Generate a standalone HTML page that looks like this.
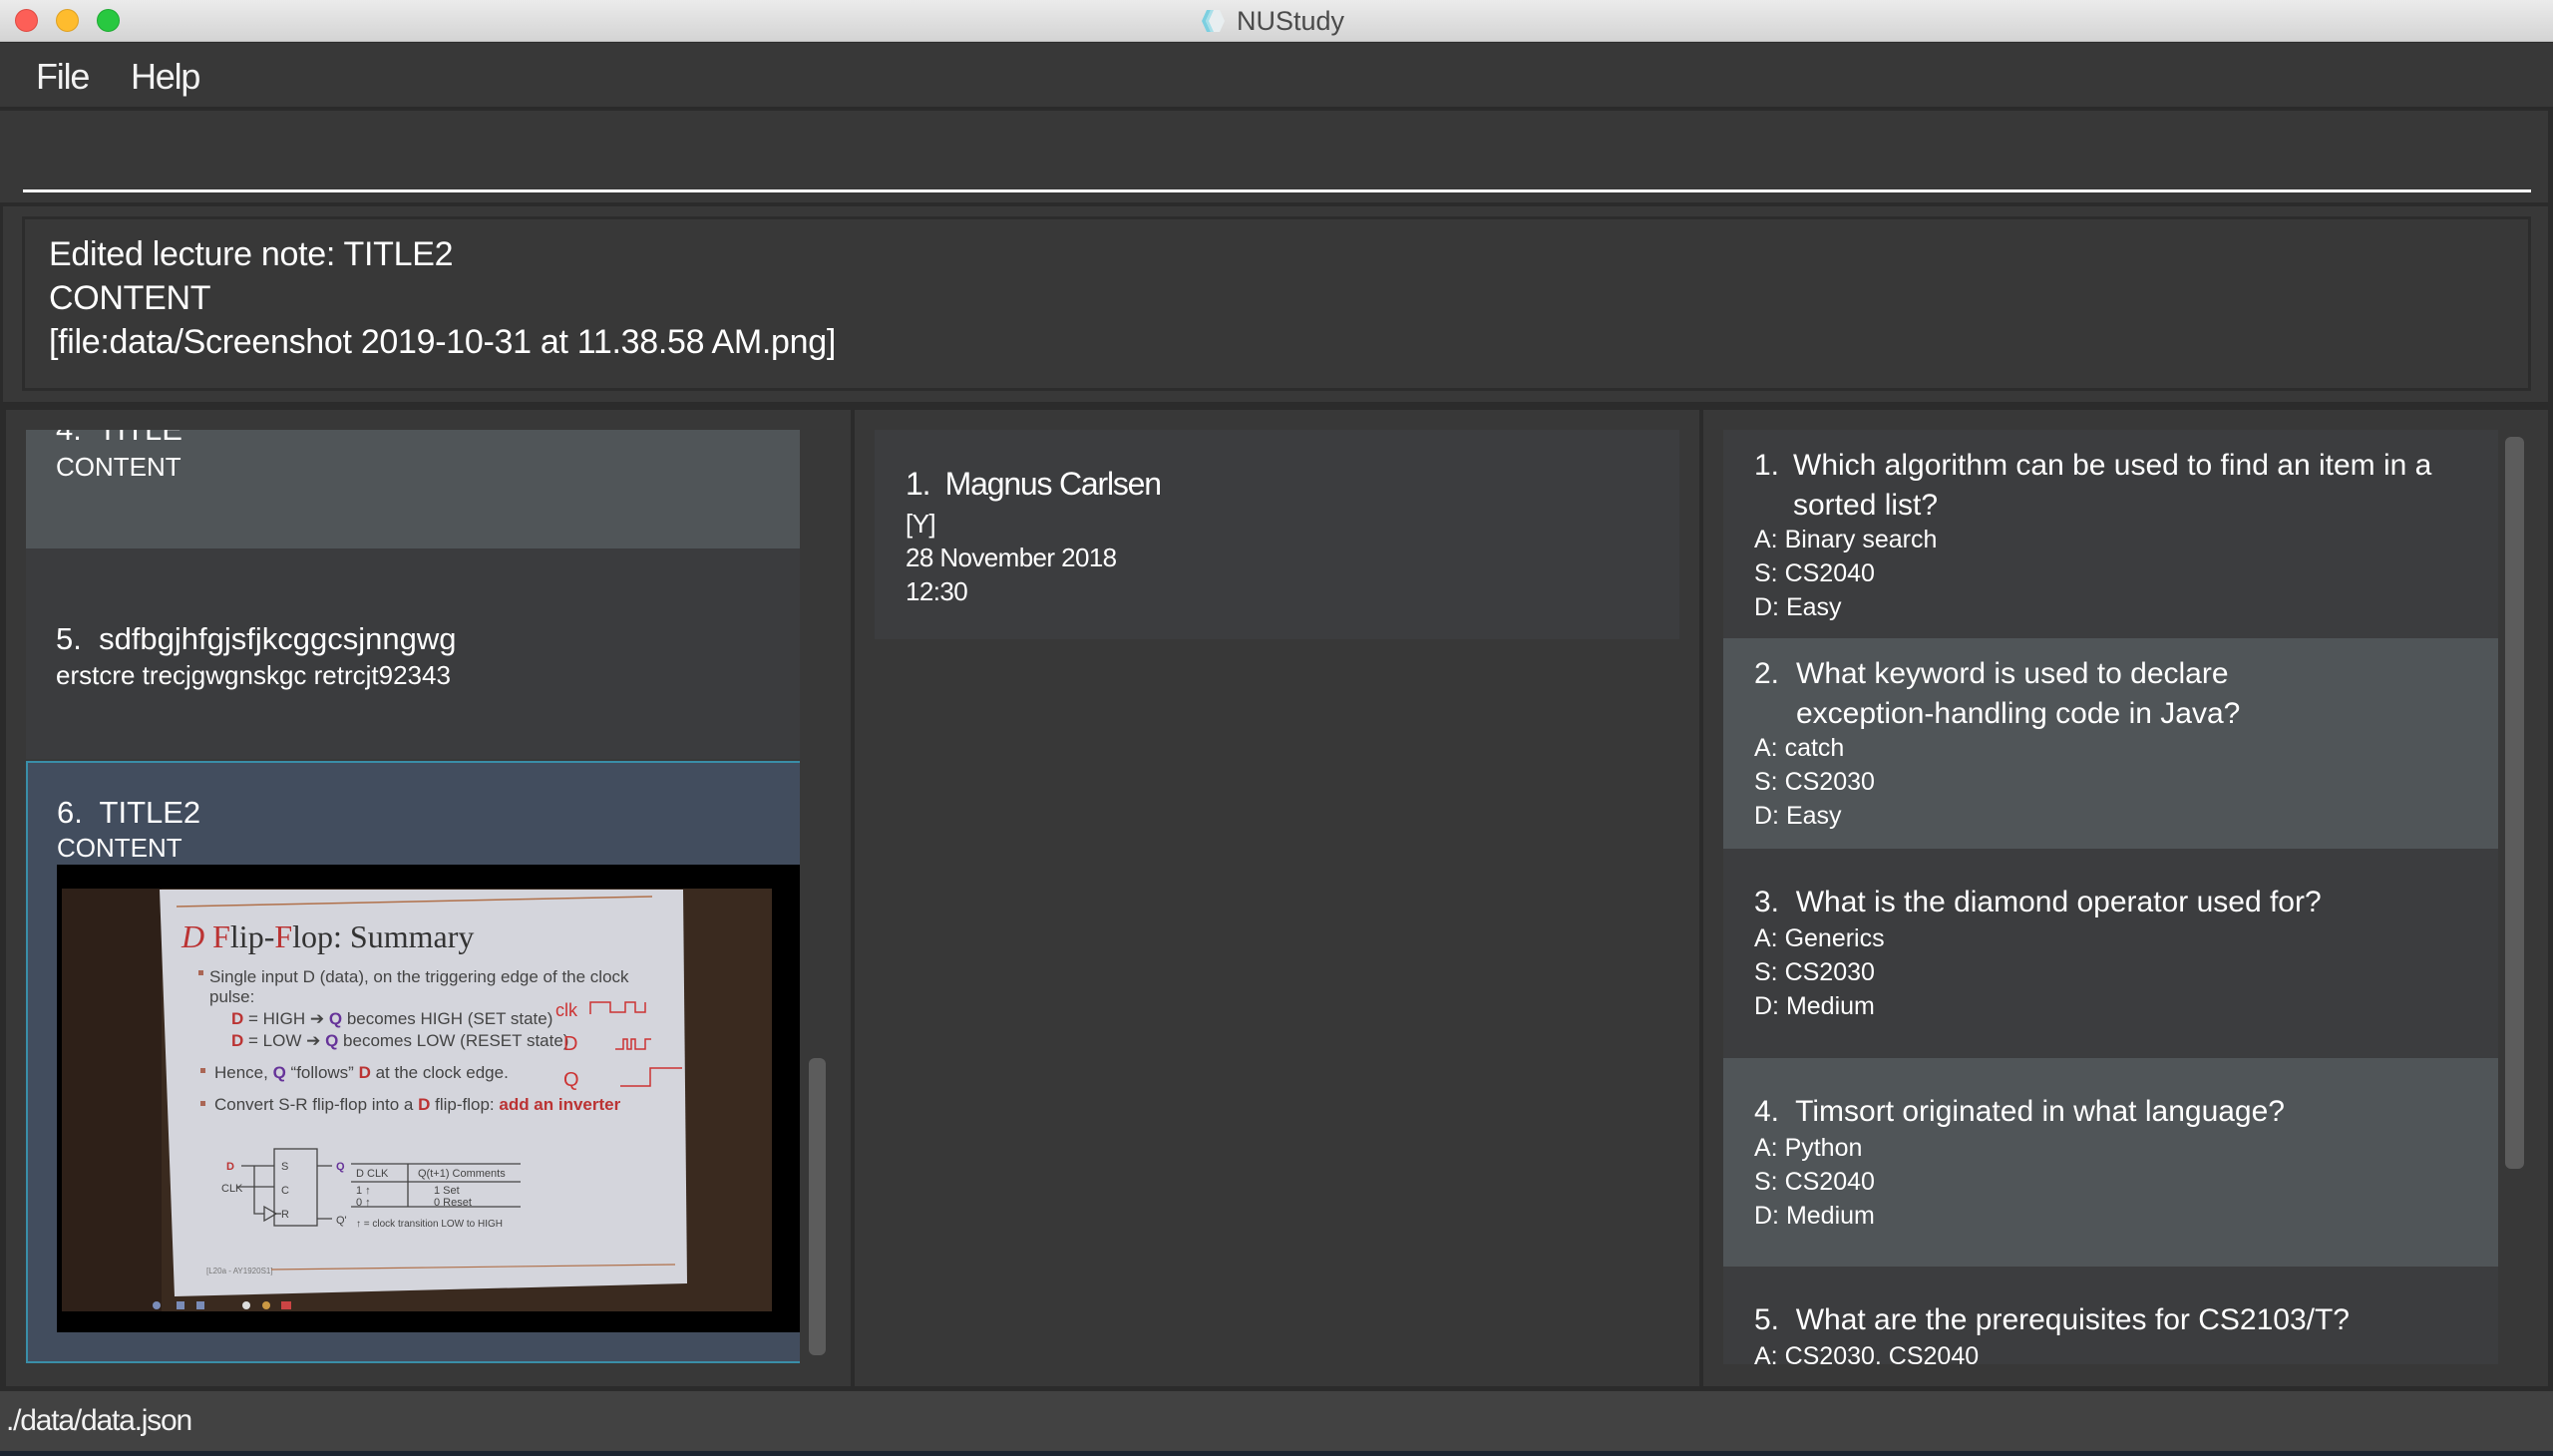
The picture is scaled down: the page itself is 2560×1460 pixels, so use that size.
<!DOCTYPE html>
<html><head><meta charset="utf-8"><style>
*{margin:0;padding:0;box-sizing:border-box}
body{width:2560px;height:1460px;background:#2b2b2b;font-family:"Liberation Sans",sans-serif;color:#fff;position:relative;overflow:hidden}
.abs{position:absolute}
.t{position:absolute;white-space:nowrap}
.cond{letter-spacing:-1.2px}
</style></head><body>
<!-- title bar -->
<div class="abs" style="left:0;top:0;width:2560px;height:42px;background:linear-gradient(#ebebeb,#d4d4d4);border-bottom:1px solid #b8b8b8"></div>
<div class="abs" style="left:15px;top:9px;width:23px;height:23px;border-radius:50%;background:#fd5f57;border:1px solid #de4a42"></div>
<div class="abs" style="left:56px;top:9px;width:23px;height:23px;border-radius:50%;background:#febc2e;border:1px solid #dea123"></div>
<div class="abs" style="left:97px;top:9px;width:23px;height:23px;border-radius:50%;background:#28c840;border:1px solid #1eaa32"></div>
<svg class="abs" style="left:1203px;top:8px" width="26" height="26" viewBox="0 0 26 26"><polygon points="7,2 20,2 25,13 20,24 7,24 2,13" fill="#e8eef0"/><polygon points="7,2 11,2 6,13 11,24 7,24 2,13" fill="#7ccfe0"/><polygon points="11,2 14,2 9,13 14,24 11,24 6,13" fill="#a8dfe9"/></svg>
<div class="t" style="left:1240px;top:6px;font-size:27px;color:#4a4a4a">NUStudy</div>
<!-- menu -->
<div class="abs" style="left:0;top:43px;width:2560px;height:66px;background:#383838;border-bottom:2px solid #2a2a2a"></div>
<div class="t cond" style="left:36px;top:56px;font-size:36px;color:#f2f2f2">File</div>
<div class="t cond" style="left:131px;top:56px;font-size:36px;color:#f2f2f2">Help</div>
<!-- command box -->
<div class="abs" style="left:0;top:111px;width:2555px;height:92px;background:#383838"></div>
<div class="abs" style="left:23px;top:190px;width:2515px;height:3px;background:#fff"></div>
<!-- result -->
<div class="abs" style="left:3px;top:207px;width:2552px;height:196px;background:#383838"></div>
<div class="abs" style="left:22px;top:217px;width:2516px;height:175px;background:#383838;border:3px solid #2c2c2c"></div>
<div class="t" style="left:49px;top:233px;font-size:34px;line-height:44px;color:#fff;letter-spacing:-0.3px">Edited lecture note: TITLE2<br>CONTENT<br>[file:data/Screenshot 2019-10-31 at 11.38.58 AM.png]</div>
<!-- panels -->
<div class="abs" style="left:6px;top:411px;width:847px;height:979px;background:#383838"></div>
<div class="abs" style="left:857px;top:411px;width:847px;height:979px;background:#383838"></div>
<div class="abs" style="left:1708px;top:411px;width:847px;height:979px;background:#383838"></div>

<!-- left list -->
<div class="abs" style="left:26px;top:431px;width:776px;height:936px;overflow:hidden">
  <div class="abs" style="left:0;top:0;width:776px;height:119px;background:#505558"></div>
  <div class="t" style="left:30px;top:-18px;font-size:31px">4.&nbsp; TITLE</div>
  <div class="t" style="left:30px;top:22px;font-size:26px">CONTENT</div>
  <div class="abs" style="left:0;top:119px;width:776px;height:211px;background:#3b3c3e"></div>
  <div class="t" style="left:30px;top:192px;font-size:31px">5.&nbsp; sdfbgjhfgjsfjkcggcsjnngwg</div>
  <div class="t" style="left:30px;top:231px;font-size:26px">erstcre trecjgwgnskgc retrcjt92343</div>
  <div class="abs" style="left:0;top:332px;width:776px;height:604px;background:#424d5e;border:2px solid #3a8ea8;border-right:none"></div>
  <div class="t" style="left:31px;top:366px;font-size:31px">6.&nbsp; TITLE2</div>
  <div class="t" style="left:31px;top:404px;font-size:26px">CONTENT</div>
  <svg class="abs" style="left:31px;top:436px" width="745" height="469" viewBox="0 0 745 469">
    <rect width="745" height="469" fill="#000"/>
    <rect x="5" y="24" width="712" height="424" fill="#3a2a1f"/>
    <rect x="5" y="24" width="100" height="424" fill="#2e2018"/>
    <polygon points="103,25 628,25 632,420 118,433" fill="#d4d5dc"/>
    <line x1="120" y1="42" x2="597" y2="32" stroke="#b0704a" stroke-width="1.5"/>
    <text x="125" y="83" font-family="Liberation Serif,serif" font-size="32" fill="#333"><tspan fill="#b33" font-style="italic">D</tspan> <tspan fill="#b33">F</tspan>lip-<tspan fill="#b33">F</tspan>lop: Summary</text>
    <g font-size="17" fill="#444">
      <text x="153" y="118">Single input D (data), on the triggering edge of the clock</text>
      <text x="153" y="138">pulse:</text>
      <text x="175" y="160"><tspan fill="#b33" font-weight="bold">D</tspan> = HIGH ➔ <tspan fill="#639" font-weight="bold">Q</tspan> becomes HIGH (SET state)</text>
      <text x="175" y="182"><tspan fill="#b33" font-weight="bold">D</tspan> = LOW ➔ <tspan fill="#639" font-weight="bold">Q</tspan> becomes LOW (RESET state)</text>
      <text x="158" y="214">Hence, <tspan fill="#639" font-weight="bold">Q</tspan> “follows” <tspan fill="#b33" font-weight="bold">D</tspan> at the clock edge.</text>
      <text x="158" y="246">Convert S-R flip-flop into a <tspan fill="#b33" font-weight="bold">D</tspan> flip-flop: <tspan fill="#b33" font-weight="bold">add an inverter</tspan></text>
    </g>
    <g fill="#a65" ><rect x="142" y="106" width="5" height="5"/><rect x="144" y="204" width="5" height="5"/><rect x="144" y="237" width="5" height="5"/></g>
    <g stroke="#c33" stroke-width="1.5" fill="none">
      <path d="M535,150 v-12 h20 v10 h15 v-10 h10 v10 h10 v-10"/>
      <path d="M560,185 h8 v-10 h4 v10 h4 v-10 h4 v10 h10 v-10 h6"/>
      <path d="M565,222 h30 v-18 h32"/>
      <text x="500" y="152" font-size="18" fill="#c33" stroke="none">clk</text>
      <text x="508" y="186" font-size="20" fill="#c33" stroke="none">D</text>
      <text x="508" y="222" font-size="20" fill="#c33" stroke="none">Q</text>
    </g>
    <g stroke="#444" stroke-width="1.3" fill="none">
      <rect x="218" y="285" width="43" height="77"/>
      <path d="M185,302 h33 M180,323 h38 M198,302 v48 h10 M225,350 h-7 M261,302 h15 M261,355 h15"/>
      <path d="M208,343 l12,7 l-12,7z"/>
      <path d="M295,300 h170 M295,318 h170 M295,343 h170 M352,300 v43"/>
    </g>
    <g font-size="11" fill="#444">
      <text x="170" y="306" fill="#b33" font-weight="bold">D</text><text x="165" y="328">CLK</text>
      <text x="225" y="306">S</text><text x="225" y="330">C</text><text x="225" y="354">R</text>
      <text x="280" y="306" fill="#639" font-weight="bold">Q</text><text x="280" y="360">Q'</text>
      <text x="300" y="313">D  CLK</text><text x="362" y="313">Q(t+1)  Comments</text>
      <text x="300" y="330">1   ↑</text><text x="378" y="330">1     Set</text>
      <text x="300" y="342">0   ↑</text><text x="378" y="342">0     Reset</text>
      <text x="300" y="363" font-size="10">↑ = clock transition LOW to HIGH</text>
      <text x="150" y="410" font-size="8" fill="#777">[L20a - AY1920S1]</text>
    </g>
    <line x1="215" y1="406" x2="620" y2="401" stroke="#b0704a" stroke-width="1.2"/>
    <g fill="#7a8cb8"><circle cx="100" cy="442" r="4"/><rect x="120" y="438" width="8" height="8"/><rect x="140" y="438" width="8" height="8"/><circle cx="190" cy="442" r="4" fill="#ddd"/><circle cx="210" cy="442" r="4" fill="#c94"/><rect x="225" y="438" width="10" height="8" fill="#c44"/></g>
  </svg>
</div>
<div class="abs" style="left:811px;top:1061px;width:17px;height:298px;background:#5c5c5c;border-radius:6px"></div>

<!-- middle -->
<div class="abs" style="left:877px;top:431px;width:807px;height:210px;background:#3c3d3f"></div>
<div class="t cond" style="left:908px;top:467px;font-size:32px">1.&nbsp; Magnus Carlsen</div>
<div class="t" style="left:908px;top:508px;font-size:26px;line-height:34px;letter-spacing:-0.6px">[Y]<br>28 November 2018<br>12:30</div>

<!-- right -->
<div class="abs" style="left:1728px;top:431px;width:777px;height:937px;overflow:hidden;font-size:25px;line-height:34px">
  <div class="abs" style="left:0;top:0;width:777px;height:209px;background:#3c3d3f"></div>
  <div class="abs" style="left:0;top:209px;width:777px;height:211px;background:#505558"></div>
  <div class="abs" style="left:0;top:420px;width:777px;height:210px;background:#3c3d3f"></div>
  <div class="abs" style="left:0;top:630px;width:777px;height:209px;background:#505558"></div>
  <div class="abs" style="left:0;top:839px;width:777px;height:98px;background:#3c3d3f"></div>

  <div class="t" style="left:31px;top:16px;font-size:30px;line-height:40px">1.</div>
  <div class="t" style="left:70px;top:16px;font-size:30px;line-height:40px">Which algorithm can be used to find an item in a<br>sorted list?</div>
  <div class="t" style="left:31px;top:93px">A: Binary search<br>S: CS2040<br>D: Easy</div>

  <div class="t" style="left:31px;top:225px;font-size:30px;line-height:40px">2.</div>
  <div class="t" style="left:73px;top:225px;font-size:30px;line-height:40px">What keyword is used to declare<br>exception-handling code in Java?</div>
  <div class="t" style="left:31px;top:302px">A: catch<br>S: CS2030<br>D: Easy</div>

  <div class="t" style="left:31px;top:454px;font-size:30px;line-height:40px">3.&nbsp; What is the diamond operator used for?</div>
  <div class="t" style="left:31px;top:493px">A: Generics<br>S: CS2030<br>D: Medium</div>

  <div class="t" style="left:31px;top:664px;font-size:30px;line-height:40px">4.&nbsp; Timsort originated in what language?</div>
  <div class="t" style="left:31px;top:703px">A: Python<br>S: CS2040<br>D: Medium</div>

  <div class="t" style="left:31px;top:873px;font-size:30px;line-height:40px">5.&nbsp; What are the prerequisites for CS2103/T?</div>
  <div class="t" style="left:31px;top:912px">A: CS2030, CS2040</div>
</div>
<div class="abs" style="left:2512px;top:438px;width:19px;height:734px;background:#5c5c5c;border-radius:6px"></div>

<!-- status -->
<div class="abs" style="left:0;top:1395px;width:2560px;height:60px;background:#424242"></div>
<div class="abs" style="left:0;top:1455px;width:2560px;height:5px;background:#1d2530"></div>
<div class="t cond" style="left:6px;top:1408px;font-size:30px;color:#f2f2f2">./data/data.json</div>
</body></html>
